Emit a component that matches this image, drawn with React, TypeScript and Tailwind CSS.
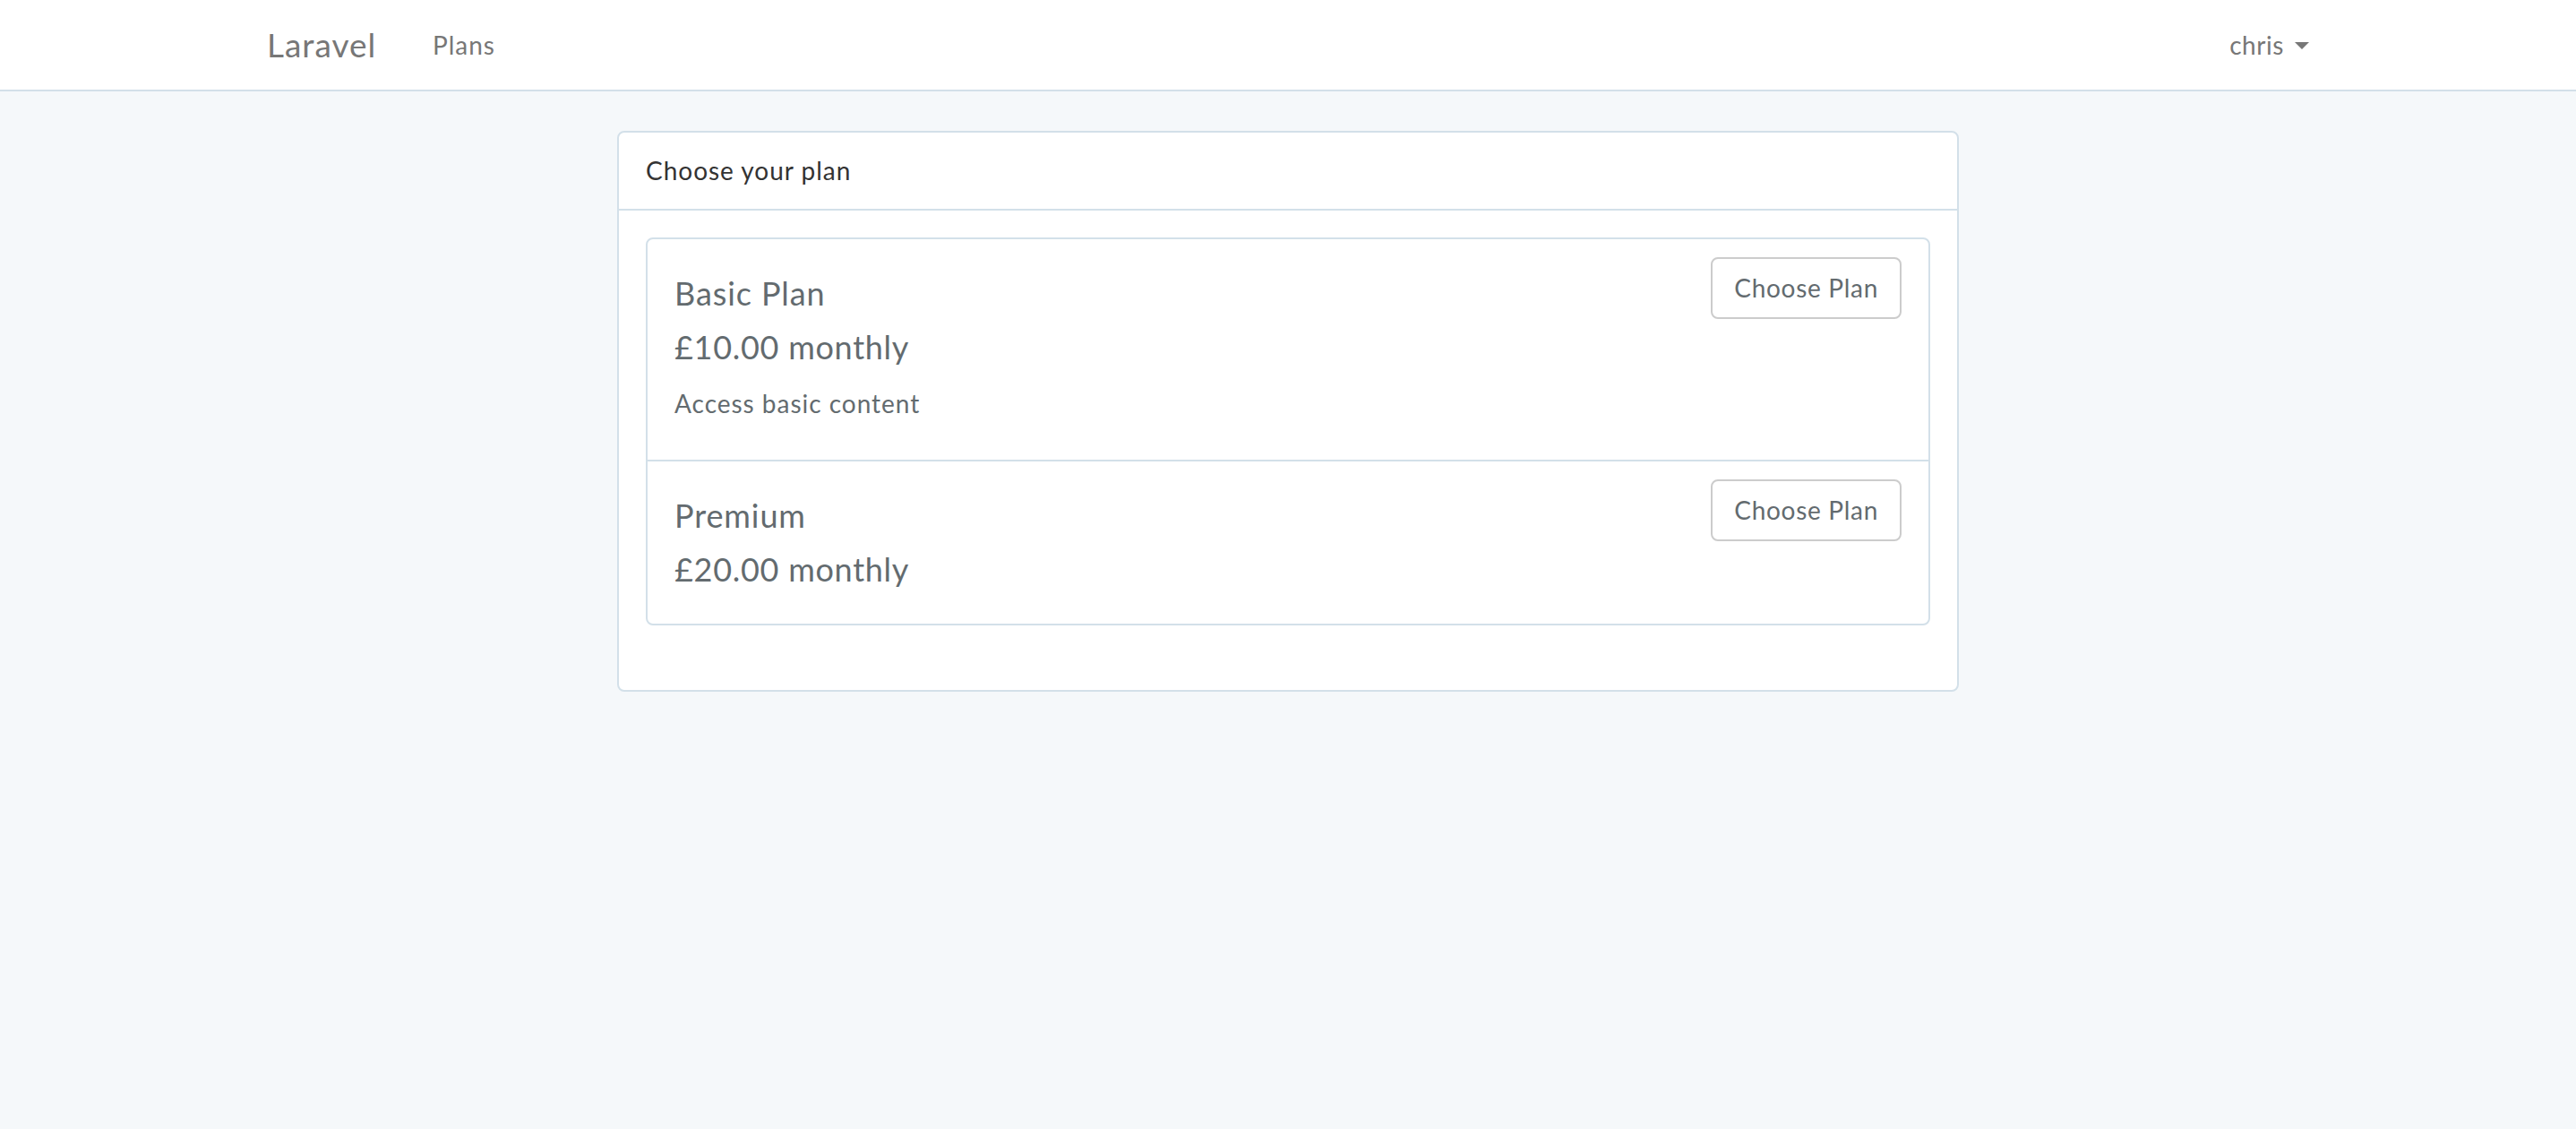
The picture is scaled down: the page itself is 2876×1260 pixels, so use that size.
export default function App() {
  const plans = [
    { name: "Basic Plan", price: "£10.00 monthly", description: "Access basic content" },
    { name: "Premium", price: "£20.00 monthly", description: "" },
  ];

  return (
    <div className="min-h-screen bg-[#f5f8fa] font-['Lato','Open_Sans',sans-serif] text-[28px] leading-[1.6] tracking-[0.035em] text-[#636b6f]">
      <nav className="bg-white border-b-2 border-[#d3e0e9] mb-[44px]">
        <div className="w-[2340px] mx-auto px-[30px] h-[100px] flex items-center">
          <a className="w-[185px] text-[37px] leading-[40px] text-[#777]">Laravel</a>
          <a className="text-[28px] leading-[40px] text-[#777]">Plans</a>
          <div className="ml-auto flex items-center text-[28px] leading-[40px] tracking-[0.02em] text-[#777]">
            chris
            <span className="ml-[12px] mt-[2px] w-0 h-0 border-t-[8px] border-t-[#777] border-x-[8px] border-x-transparent"></span>
          </div>
        </div>
      </nav>

      <div className="w-[1498px] mx-auto">
        <div className="bg-white border-2 border-[#d3e0e9] rounded-[8px]">
          <div className="px-[30px] py-[20px] text-[#333] border-b-2 border-[#d3e0e9]">Choose your plan</div>
          <div className="p-[30px] pb-[32px]">
            <div className="mb-[40px]">
              {plans.map((plan, i) => (
                <div
                  key={plan.name}
                  className={
                    i === 0
                      ? "flex justify-between items-start px-[30px] py-[20px] border-2 border-[#d3e0e9] rounded-t-[8px]"
                      : "flex justify-between items-start px-[30px] py-[20px] border-2 border-[#d3e0e9] rounded-b-[8px] -mt-[2px]"
                  }
                >
                  <div>
                    <h4 className="mt-[20px] mb-[20px] text-[36px] leading-[40.6px] tracking-[0.025em]">{plan.name}</h4>
                    <h4 className="mt-[20px] mb-[20px] text-[36px] leading-[40.6px] tracking-[0.02em]">{plan.price}</h4>
                    {plan.description && <p className="mb-[20px]">{plan.description}</p>}
                  </div>
                  <button className="px-[24px] py-[10px] bg-white border-2 border-[#ccc] rounded-[8px] text-[28px] leading-[44.8px] tracking-[0.025em] text-[#636b6f]">
                    Choose Plan
                  </button>
                </div>
              ))}
            </div>
          </div>
        </div>
      </div>
    </div>
  );
}
